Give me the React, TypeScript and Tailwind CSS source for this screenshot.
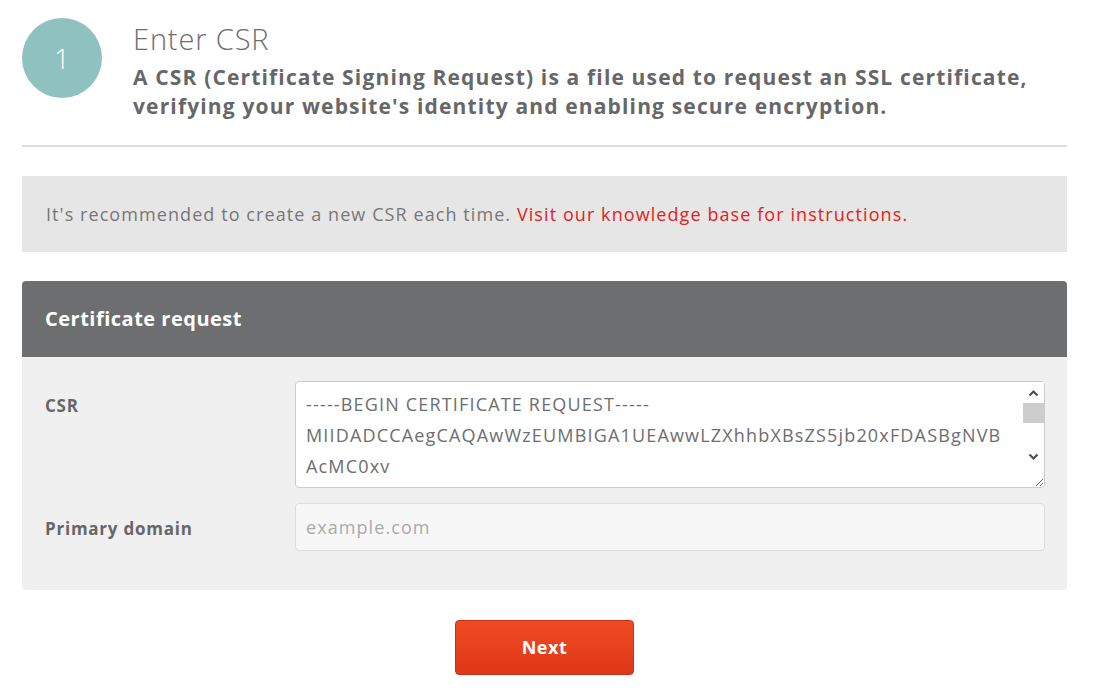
import { useState } from "react";

const csrText = `-----BEGIN CERTIFICATE REQUEST-----
MIIDADCCAegCAQAwWzEUMBIGA1UEAwwLZXhhbXBsZS5jb20xFDASBgNVB
AcMC0xv
c2FuZ2VsZXMxCzAJBgNVBAgMAkNBMQswCQYDVQQGEwJVUzETMBEGA1UE
CgwKRXhhbXBsZSBDbzCCASIwDQYJKoZIhvcNAQEBBQADggEPADCCAQoC
-----END CERTIFICATE REQUEST-----`;

function FakeScrollbar() {
  return (
    <div className="pointer-events-none absolute top-[1px] right-[1px] flex h-[85px] w-[21px] flex-col bg-white">
      <div className="flex h-[21px] items-center justify-center">
        <svg width="11" height="8" viewBox="0 0 11 8">
          <path d="M1.5 6.5 L5.5 2.5 L9.5 6.5" fill="none" stroke="#505050" strokeWidth="2.2" />
        </svg>
      </div>
      <div className="h-[20px] bg-[#cdcdcd]" />
      <div className="flex-1" />
      <div className="flex h-[21px] items-center justify-center">
        <svg width="11" height="8" viewBox="0 0 11 8">
          <path d="M1.5 1.5 L5.5 5.5 L9.5 1.5" fill="none" stroke="#505050" strokeWidth="2.2" />
        </svg>
      </div>
    </div>
  );
}

export default function App() {
  const [csr, setCsr] = useState(csrText);
  const [domain, setDomain] = useState("");

  return (
    <div className="min-h-screen bg-white font-['Open_Sans',sans-serif] text-[#6d6e70]">
      <div className="ml-[22px] w-[1045px]">
        <div className="flex items-start gap-[31px] pt-[18px] pb-[24px]">
          <div className="flex h-[80px] w-[80px] shrink-0 items-center justify-center rounded-full bg-[#8fc1c1] text-[28px] font-light text-white">
            1
          </div>
          <div className="pt-[3px]">
            <h1 className="text-[29px] leading-[36px] font-light tracking-[0.03em] text-[#6d6e70]">Enter CSR</h1>
            <p className="mt-[6px] text-[21px] leading-[29px] font-bold tracking-[0.055em] text-[#666769]">
              A CSR (Certificate Signing Request) is a file used to request an SSL certificate,
              <br />
              verifying your website's identity and enabling secure encryption.
            </p>
          </div>
        </div>

        <hr className="border-t-2 border-[#dedede]" />

        <div className="mt-[29px] flex h-[76px] items-center bg-[#e6e6e6] px-[24px] text-[18px] tracking-[0.06em] text-[#777]">
          <span>
            It's recommended to create a new CSR each time.{" "}
            <a href="#" className="text-[#e2231a]">
              Visit our knowledge base for instructions.
            </a>
          </span>
        </div>

        <div className="mt-[29px] overflow-hidden rounded-[4px]">
          <div className="flex h-[76px] items-center bg-[#6d6e70] px-[23px] text-[20px] font-bold tracking-[0.025em] text-white">
            Certificate request
          </div>
          <div className="bg-[#f0f0f0] pt-[24px] pr-[22px] pb-[39px] pl-[23px]">
            <div className="flex items-start">
              <label className="w-[250px] shrink-0 pt-[12px] text-[17px] font-bold tracking-[0.045em] text-[#666769]">
                CSR
              </label>
              <div className="relative">
                <textarea
                  value={csr}
                  onChange={(e) => setCsr(e.target.value)}
                  wrap="off"
                  className="block h-[107px] w-[750px] resize overflow-hidden rounded-[4px] border border-[#cccccc] bg-white px-[10px] pt-[7px] text-[18px] leading-[31px] tracking-[0.065em] text-[#6d6e70] outline-none"
                />
                <FakeScrollbar />
              </div>
            </div>
            <div className="mt-[15px] flex items-center">
              <label className="w-[250px] shrink-0 pt-[3px] text-[17px] font-bold tracking-[0.045em] text-[#666769]">
                Primary domain
              </label>
              <input
                value={domain}
                onChange={(e) => setDomain(e.target.value)}
                placeholder="example.com"
                className="h-[48px] w-[750px] rounded-[4px] border border-[#dddddd] bg-[#f7f7f7] px-[10px] text-[18px] tracking-[0.06em] text-[#6d6e70] outline-none placeholder:text-[#aaaaaa]"
              />
            </div>
          </div>
        </div>

        <div className="mt-[30px] flex justify-center">
          <button className="h-[55px] w-[179px] rounded-[4px] border border-[#c9301a] bg-gradient-to-b from-[#f04a23] to-[#df3719] text-[18px] font-bold tracking-[0.03em] text-white">
            Next
          </button>
        </div>
      </div>
    </div>
  );
}
